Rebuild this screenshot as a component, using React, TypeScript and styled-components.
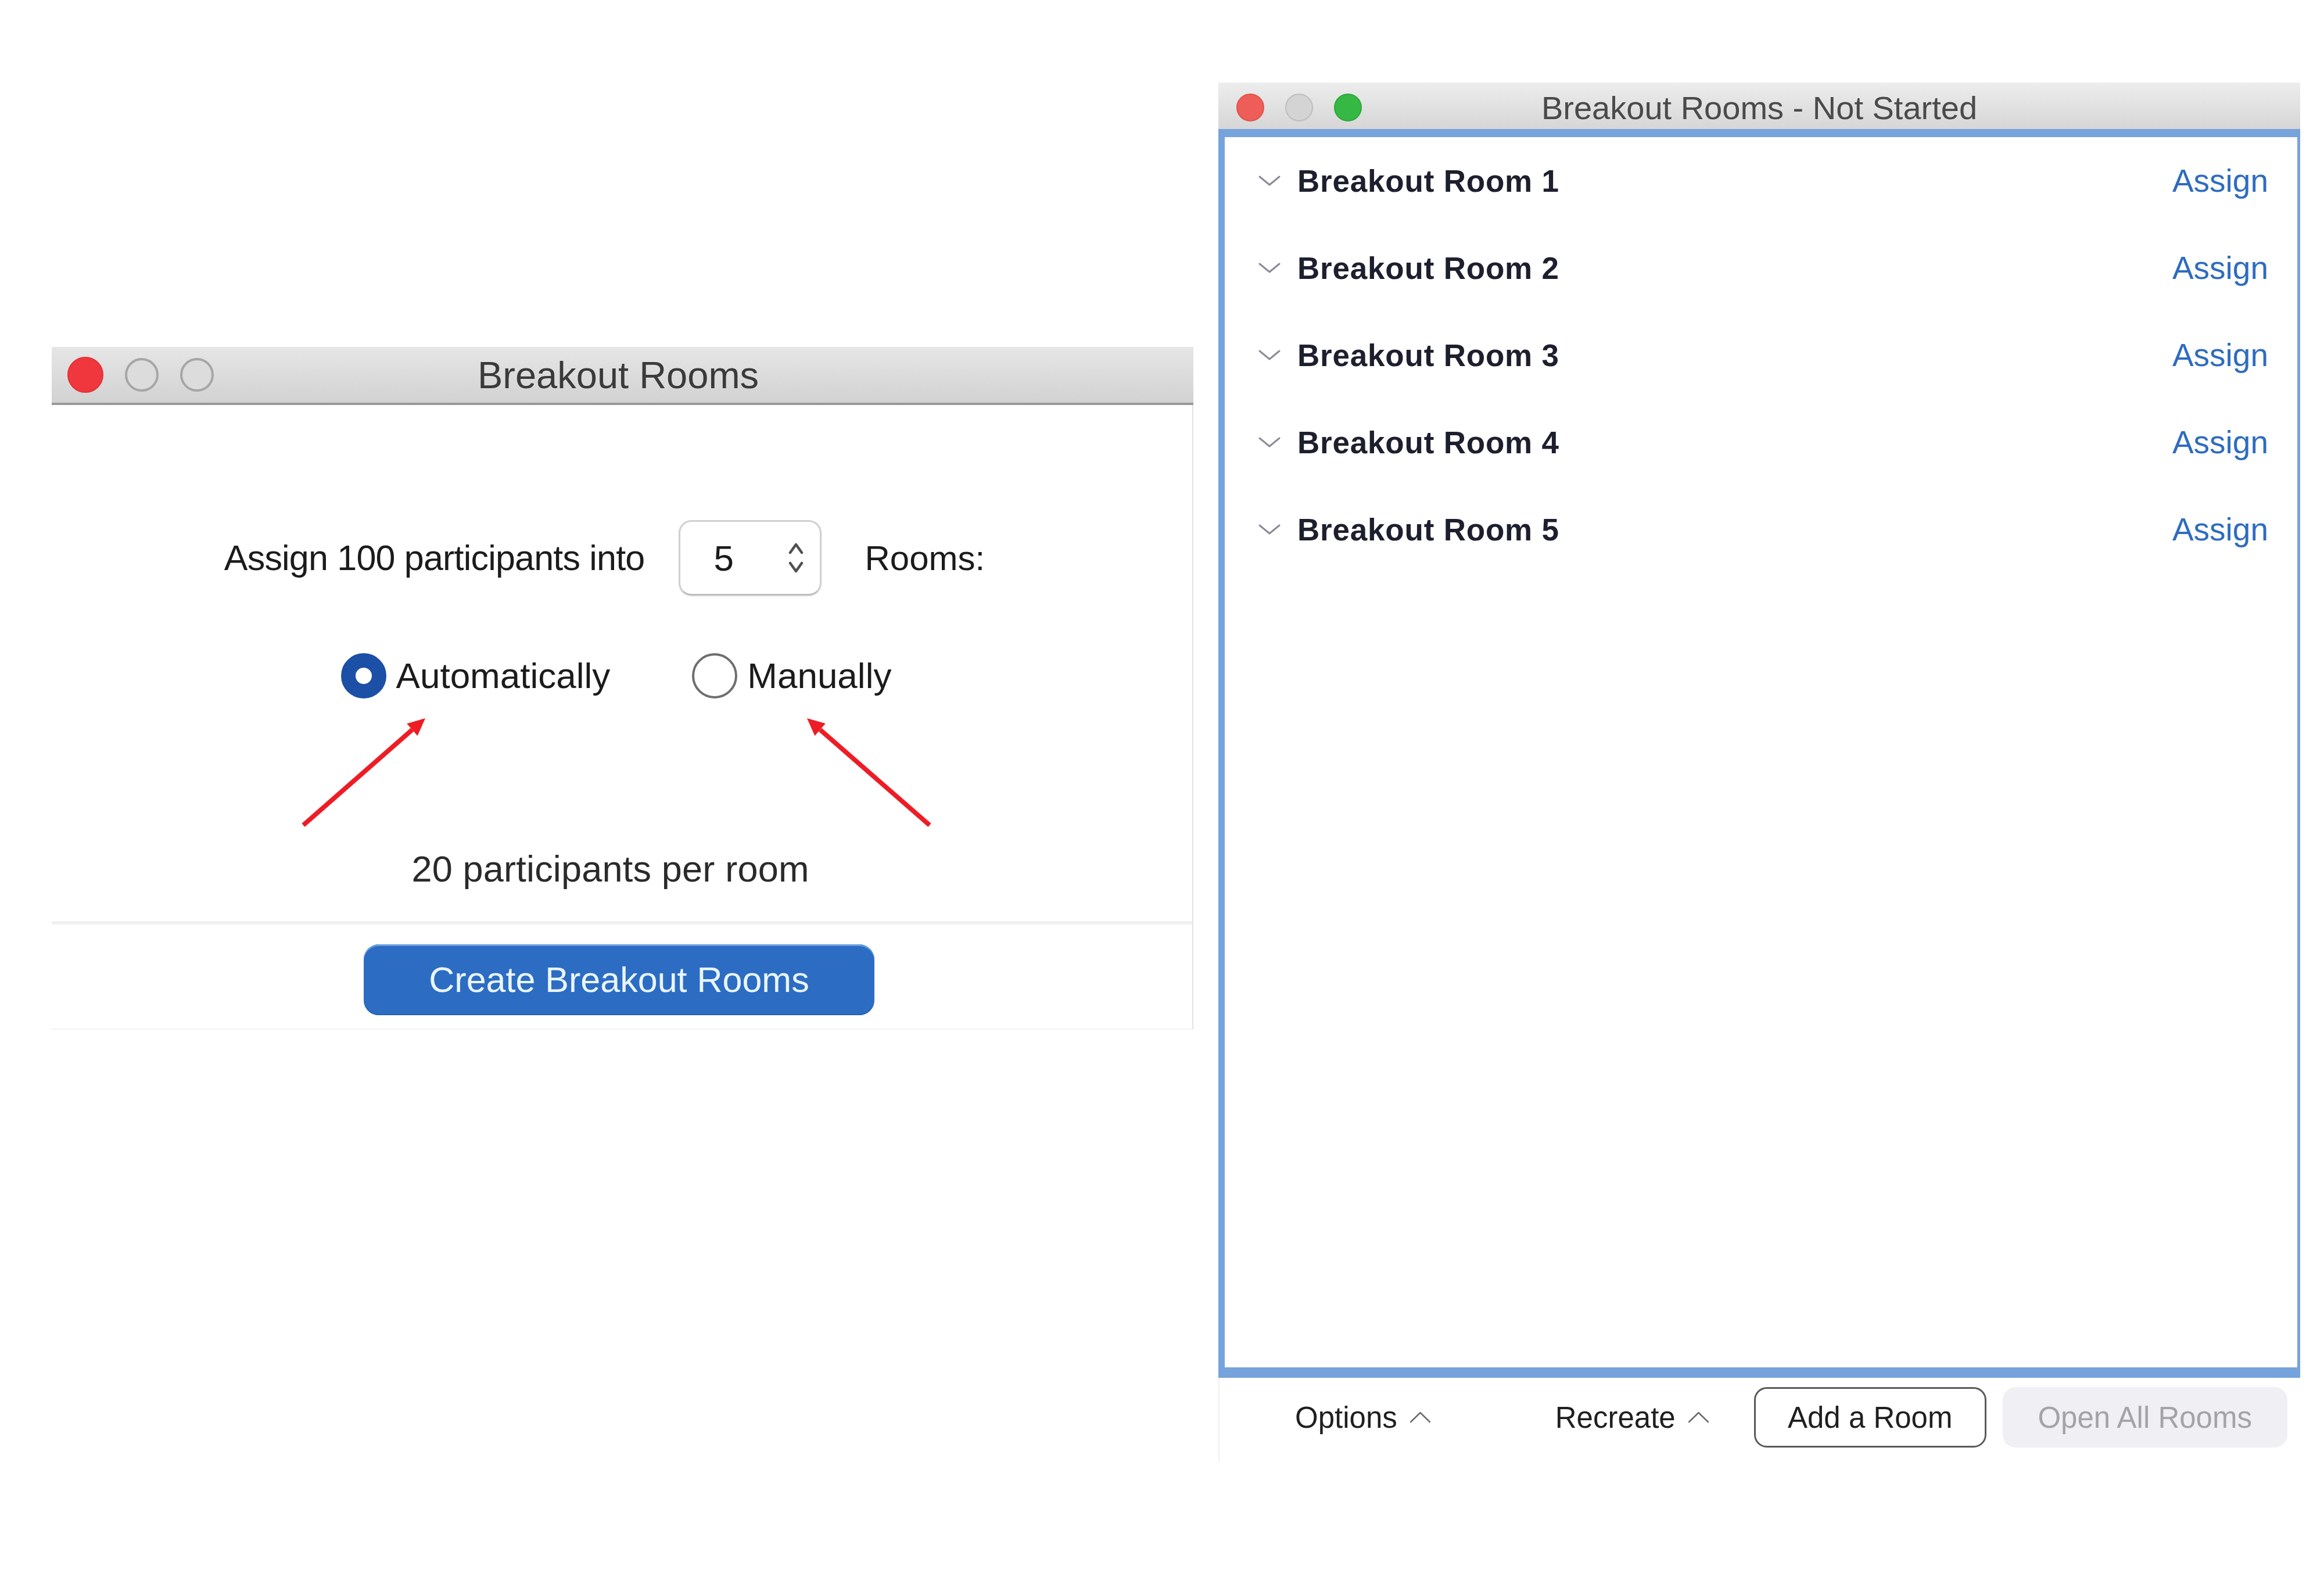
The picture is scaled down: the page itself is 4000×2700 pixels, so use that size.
import React from "react";
import styled, { createGlobalStyle } from "styled-components";

const Global = createGlobalStyle`
  html, body { margin: 0; padding: 0; background: #ffffff; }
  body { font-family: "Liberation Sans", Arial, sans-serif; }
  * { box-sizing: border-box; }
`;

const Page = styled.div`
  width: 4000px;
  height: 2700px;
  display: flex;
  align-items: flex-start;
  padding-left: 89px;
  background: #ffffff;
  overflow: hidden;
`;

/* ---------- shared window chrome ---------- */

const TitleBar = styled.div<{ $h: number; $pad: number; $padR: number; $padT: number; $top: string; $bottom: string; $edge: string }>`
  height: ${(p) => p.$h}px;
  display: grid;
  grid-template-columns: 1fr auto 1fr;
  align-items: center;
  padding: ${(p) => p.$padT}px ${(p) => p.$padR}px 0 ${(p) => p.$pad}px;
  background: linear-gradient(to bottom, ${(p) => p.$top}, ${(p) => p.$bottom});
  border-bottom: ${(p) => p.$edge};
`;

const Lights = styled.div<{ $gap: number }>`
  display: flex;
  align-items: center;
  gap: ${(p) => p.$gap}px;
`;

const Light = styled.span<{ $size: number; $fill: string; $stroke: string; $sw: number }>`
  width: ${(p) => p.$size}px;
  height: ${(p) => p.$size}px;
  border-radius: 50%;
  background: ${(p) => p.$fill};
  border: ${(p) => p.$sw}px solid ${(p) => p.$stroke};
`;

const Title = styled.div<{ $size: number; $color: string }>`
  font-size: ${(p) => p.$size}px;
  color: ${(p) => p.$color};
  white-space: nowrap;
`;

/* ---------- left window ---------- */

const LeftWindow = styled.div`
  position: relative;
  width: 1965px;
  margin-top: 597px;
  display: flex;
  flex-direction: column;
`;

const LeftBody = styled.div`
  display: flex;
  flex-direction: column;
  align-items: center;
  border-right: 2px solid #e2e2e2;
  border-bottom: 2px solid #f1f1f1;
  background: #ffffff;
`;

const Upper = styled.div`
  width: 100%;
  display: flex;
  flex-direction: column;
  align-items: center;
  padding-top: 198px;
  padding-bottom: 55px;
`;

const AssignRow = styled.div`
  height: 130px;
  display: flex;
  align-items: center;
  margin-right: 60px;
`;

const BodyText = styled.span<{ $size: number; $ls?: number; $color?: string }>`
  font-size: ${(p) => p.$size}px;
  letter-spacing: ${(p) => p.$ls ?? 0}px;
  color: ${(p) => p.$color ?? "#1b1b1b"};
  white-space: nowrap;
`;

const Spinner = styled.div`
  width: 246px;
  height: 130px;
  margin: 0 74px 0 59px;
  border: 3px solid #d0d0d0;
  border-bottom-color: #bdbdbd;
  border-radius: 22px;
  display: flex;
  align-items: center;
  justify-content: space-between;
  padding: 0 28px 0 57px;
  background: #ffffff;
  box-shadow: 0 2px 3px rgba(0, 0, 0, 0.08);
`;

const RadioRow = styled.div`
  margin-top: 98px;
  margin-right: 20px;
  height: 79px;
  display: flex;
  align-items: center;
  gap: 141px;
`;

const RadioOption = styled.label`
  display: flex;
  align-items: center;
  gap: 17px;
`;

const RadioDot = styled.span<{ $checked?: boolean }>`
  width: 78px;
  height: 78px;
  border-radius: 50%;
  background: #ffffff;
  border: ${(p) => (p.$checked ? "25px solid #1c4fa6" : "4px solid #6e6e6e")};
`;

const PerRoom = styled.div`
  margin-top: 258px;
  line-height: 70px;
  font-size: 63px;
  letter-spacing: 0.2px;
  color: #2a2a2a;
  margin-right: 40px;
`;

const Separator = styled.div`
  width: 100%;
  height: 6px;
  background: #f0f0f0;
`;

const ButtonArea = styled.div`
  width: 100%;
  display: flex;
  justify-content: center;
  padding: 34px 0 23px;
`;

const PrimaryButton = styled.button`
  width: 879px;
  height: 122px;
  border: none;
  border-radius: 26px;
  background: #2c6dc3;
  box-shadow: inset 0 3px 0 #6a9de0, inset 0 -2px 0 #2462b5;
  color: #eaf5ff;
  font-family: "Liberation Sans", Arial, sans-serif;
  font-size: 61px;
  margin-left: -10px;
`;

const ArrowLayer = styled.svg`
  position: absolute;
  left: 0;
  top: 0;
  pointer-events: none;
`;

/* ---------- right window ---------- */

const RightWindow = styled.div`
  width: 1862px;
  margin-top: 142px;
  margin-left: 43px;
  display: flex;
  flex-direction: column;
`;

const Frame = styled.div`
  height: 2149px;
  border-style: solid;
  border-color: #76a3dc;
  border-width: 14px 5px 18px 11px;
  background: #ffffff;
  display: flex;
  flex-direction: column;
`;

const RoomRow = styled.div`
  height: 150px;
  flex: 0 0 150px;
  display: flex;
  align-items: center;
  padding: 0 50px 0 58px;
`;

const RoomName = styled.span`
  margin-left: 29px;
  font-size: 53px;
  font-weight: 700;
  letter-spacing: 0.8px;
  color: #1e1f2e;
  flex: 1;
`;

const AssignLink = styled.span`
  font-size: 55px;
  color: #2e6cc0;
`;

const Footer = styled.div`
  height: 144px;
  display: flex;
  align-items: center;
  padding: 0 0 8px 130px;
  border-left: 2px solid #efefef;
`;

const MenuToggle = styled.span<{ $mr: number }>`
  display: flex;
  align-items: center;
  gap: 21px;
  font-size: 51px;
  color: #1f1f1f;
  margin-right: ${(p) => p.$mr}px;
`;

const FooterButton = styled.span<{ $w: number; $disabled?: boolean }>`
  width: ${(p) => p.$w}px;
  height: 104px;
  display: flex;
  align-items: center;
  justify-content: center;
  border-radius: 22px;
  font-size: 51px;
  color: ${(p) => (p.$disabled ? "#a3a3a8" : "#1f1f1f")};
  background: ${(p) => (p.$disabled ? "#f0f0f4" : "#ffffff")};
  border: ${(p) => (p.$disabled ? "none" : "3px solid #5a5a5a")};
`;

const FooterGap = styled.span`
  width: 28px;
`;

/* ---------- icons ---------- */

const StepperIcon = () => (
  <svg width="26" height="56" viewBox="0 0 26 56">
    <polyline points="3,19 13,5 23,19" fill="none" stroke="#505050" strokeWidth="4.5" strokeLinecap="round" strokeLinejoin="round" />
    <polyline points="3,37 13,51 23,37" fill="none" stroke="#505050" strokeWidth="4.5" strokeLinecap="round" strokeLinejoin="round" />
  </svg>
);

const ChevronDown = () => (
  <svg width="38" height="18" viewBox="0 0 38 18">
    <polyline points="2,2 19,16 36,2" fill="none" stroke="#8a8a9a" strokeWidth="3" strokeLinecap="round" strokeLinejoin="round" />
  </svg>
);

const CaretUp = () => (
  <svg width="37" height="22" viewBox="0 0 37 22">
    <polyline points="2,19 18.5,3 35,19" fill="none" stroke="#6a6a6a" strokeWidth="2.5" strokeLinecap="round" strokeLinejoin="round" />
  </svg>
);

const rooms = [1, 2, 3, 4, 5];

export default function App() {
  return (
    <>
      <Global />
      <Page>
        <LeftWindow>
          <TitleBar $h={100} $pad={27} $padR={42} $padT={0} $top="#e6e6e6" $bottom="#d2d2d2" $edge="4px solid #9a9a9a">
            <Lights $gap={37}>
              <Light $size={62} $fill="#f0373d" $stroke="#e53037" $sw={2} />
              <Light $size={58} $fill="#dcdcdc" $stroke="#a6a6a6" $sw={4} />
              <Light $size={58} $fill="#dcdcdc" $stroke="#a6a6a6" $sw={4} />
            </Lights>
            <Title $size={65} $color="#3a3a3a">Breakout Rooms</Title>
            <span />
          </TitleBar>
          <LeftBody>
            <Upper>
              <AssignRow>
                <BodyText $size={61} $ls={-0.8}>Assign 100 participants into</BodyText>
                <Spinner>
                  <BodyText $size={62}>5</BodyText>
                  <StepperIcon />
                </Spinner>
                <BodyText $size={60}>Rooms:</BodyText>
              </AssignRow>
              <RadioRow>
                <RadioOption>
                  <RadioDot $checked />
                  <BodyText $size={62}>Automatically</BodyText>
                </RadioOption>
                <RadioOption>
                  <RadioDot />
                  <BodyText $size={62}>Manually</BodyText>
                </RadioOption>
              </RadioRow>
              <PerRoom>20 participants per room</PerRoom>
            </Upper>
            <Separator />
            <ButtonArea>
              <PrimaryButton>Create Breakout Rooms</PrimaryButton>
            </ButtonArea>
          </LeftBody>
          <ArrowLayer width="1965" height="1173" viewBox="0 0 1965 1173">
            <line x1="433" y1="823" x2="620.4" y2="658.8" stroke="#ee1c25" strokeWidth="8" />
            <polygon points="643,639 629.6,669.3 611.2,648.3" fill="#ee1c25" />
            <line x1="1511" y1="823" x2="1322.6" y2="658.7" stroke="#ee1c25" strokeWidth="8" />
            <polygon points="1300,639 1331.8,648.1 1313.4,669.3" fill="#ee1c25" />
          </ArrowLayer>
        </LeftWindow>

        <RightWindow>
          <TitleBar $h={80} $pad={31} $padR={31} $padT={6} $top="#ededed" $bottom="#d6d6d6" $edge="none">
            <Lights $gap={36}>
              <Light $size={48} $fill="#ee5d57" $stroke="#e0524c" $sw={2} />
              <Light $size={48} $fill="#d4d4d4" $stroke="#bdbdbd" $sw={2} />
              <Light $size={48} $fill="#35b844" $stroke="#2ea83c" $sw={2} />
            </Lights>
            <Title $size={56} $color="#4a4a4a">Breakout Rooms - Not Started</Title>
            <span />
          </TitleBar>
          <Frame>
            {rooms.map((n) => (
              <RoomRow key={n}>
                <ChevronDown />
                <RoomName>Breakout Room {n}</RoomName>
                <AssignLink>Assign</AssignLink>
              </RoomRow>
            ))}
          </Frame>
          <Footer>
            <MenuToggle $mr={214}>
              Options <CaretUp />
            </MenuToggle>
            <MenuToggle $mr={77}>
              Recreate <CaretUp />
            </MenuToggle>
            <FooterButton $w={400}>Add a Room</FooterButton>
            <FooterGap />
            <FooterButton $w={490} $disabled>
              Open All Rooms
            </FooterButton>
          </Footer>
        </RightWindow>
      </Page>
    </>
  );
}
